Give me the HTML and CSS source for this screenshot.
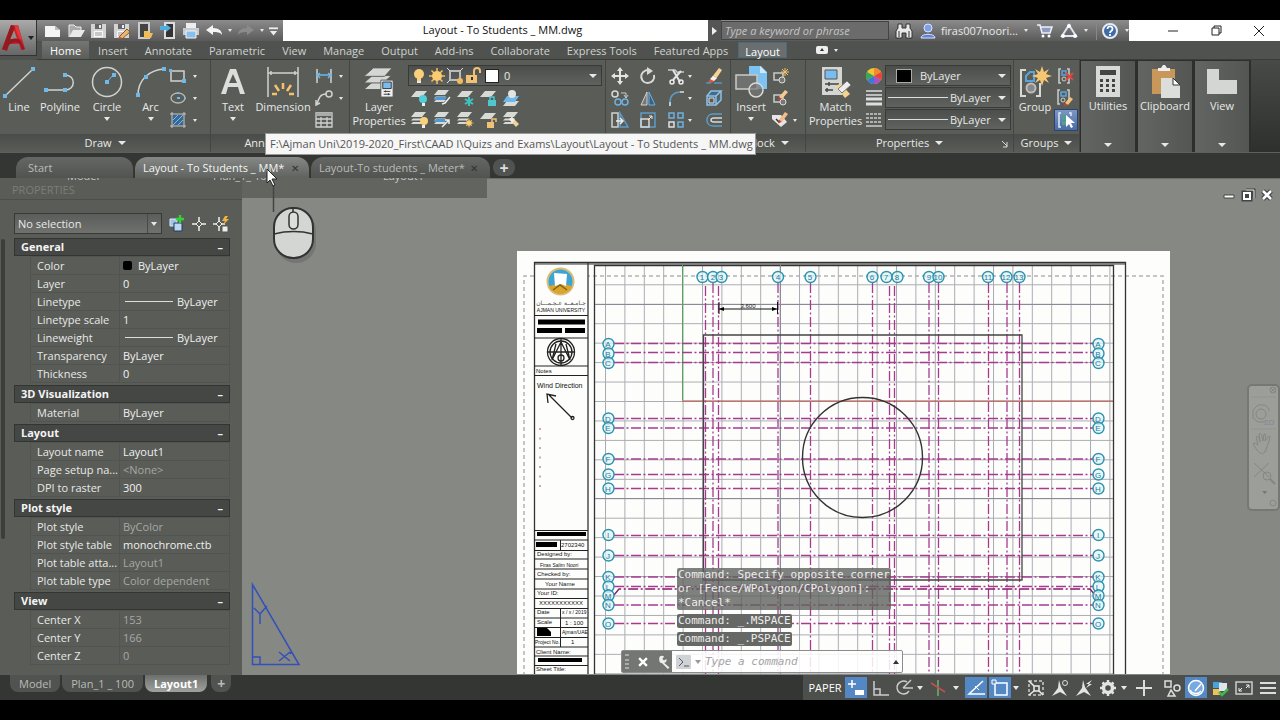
FILE: index.html
```html
<!DOCTYPE html>
<html lang="en">
<head>
<meta charset="utf-8">
<title>Layout - To Students _ MM.dwg</title>
<link rel="stylesheet" href="styles.css">
</head>
<body>
<svg class="sprite" aria-hidden="true">
  <symbol id="i-sheets" viewBox="0 0 34 34"><g fill="#d4d6d4" stroke="#5a5c58" stroke-width="1"><path d="M10 17h20l-8 8H1z"/><path d="M10 10h20l-8 8H1z"/><path d="M11 2h20l-8 9H1z"/></g><path d="M19 15h13v18H19z" fill="#f2f2f2" stroke="#555"/><path d="M21 17h9v7h-9z" fill="#79bdf0" stroke="#333"/><path d="M22 27h7M22 30h7M24 26v2M27 29v2" stroke="#333"/></symbol>
  <symbol id="i-lay" viewBox="0 0 18 18"><path d="M6 2h11l-5 6H1z" fill="#d8dad8"/></symbol>
  <symbol id="i-lays" viewBox="0 0 18 18"><path d="M5 1h11l-4 5H1zM3 7.500h10l-2 2H1zM3 11h10l-2 2H1z" fill="#d8dad8"/></symbol>
  <symbol id="i-sun" viewBox="0 0 18 18"><path d="M9 1v16M1 9h16M3.500 3.500l11 11M14.500 3.500l-11 11" stroke="#f2c05c" stroke-width="1.500"/><circle cx="9" cy="9" r="5" fill="#f9cc72"/></symbol>
  <symbol id="i-bulb" viewBox="0 0 18 18"><circle cx="9" cy="7" r="5" fill="#fbd07c"/><path d="M7 11h4v3H7z" fill="#fbd07c"/><path d="M7 14h4v2H7z" fill="#e8e8e8"/></symbol>
  <symbol id="i-new" viewBox="0 0 18 18"><path d="M1 4h10l5 4v7H1z" fill="#f4f4f4"/><path d="M11 4v4h5" fill="#bbb"/></symbol>
  <symbol id="i-save" viewBox="0 0 18 18"><path d="M1 2h15v14H1z" fill="#d4d4d4"/><path d="M5 2h7v5H5z" fill="#666"/><path d="M9 3h2v3H9z" fill="#eee"/><path d="M4 9h9v6H4z" fill="#f8f8f8"/><path d="M5 11h7M5 13h7" stroke="#999"/></symbol>
</svg>

<div class="app">
  <header class="top">
    <button class="logo" aria-label="Application menu">
      <svg width="24" height="28" viewBox="0 0 24 28"><path d="M9 1h7l7 24-4 1-2-6H7l-3 6H0z" fill="#c8242b"/><path d="M12 6l-4 9h7z" fill="#8f8f8f"/><path d="M9 1L0 25l5 2 2-6c3-3 8-4 11-1l2 6 3-1-5-9c-3-2-7-2-10 0l5-13z" fill="#951a20"/><path d="M12 1h4l4 15-3-2z" fill="#e3383c"/></svg>
      <span class="caret dark"></span>
    </button>
    <div class="titlebar">
      <div class="quick">
        <button aria-label="New"><svg><use href="#i-new"/></svg></button>
        <button aria-label="Open"><svg viewBox="0 0 18 18"><path d="M2 15V3h5l2 2h5v3" fill="#aaa" stroke="#eee"/><path d="M2 15l4-7h12l-4 7z" fill="#e8e8e8"/></svg></button>
        <button aria-label="Save"><svg><use href="#i-save"/></svg></button>
        <button aria-label="Save as"><svg viewBox="0 0 18 18"><use href="#i-save"/><path d="M6 15l8-8 3 3-8 7z" fill="#eeb36c" stroke="#7b5a35"/><path d="M5 17l1-3 3 2z" fill="#d2533e"/></svg></button>
        <button aria-label="Open from mobile"><svg viewBox="0 0 18 18"><path d="M3 1h10v15H3z" fill="#444" stroke="#ccc" stroke-width="2"/><path d="M8 9h4l1 2h4l-2 5H8z" fill="#eebd55"/></svg></button>
        <button aria-label="Save to mobile"><svg viewBox="0 0 18 18"><path d="M6 1h9v15H6z" fill="#333" stroke="#ddd" stroke-width="2"/><path d="M1 4h6V2l5 4-5 4V8H1z" fill="#51ade0"/></svg></button>
        <button aria-label="Plot"><svg viewBox="0 0 18 18"><path d="M4 1h10v5H4z" fill="#eee"/><path d="M1 6h16v7H1z" fill="#c9cbcc"/><path d="M4 9h10v7H4z" fill="#89bfec" stroke="#f2f2f2"/></svg></button>
        <button aria-label="Undo"><svg viewBox="0 0 18 18"><path d="M1 8l7-5v3c6 0 9 3 9 7-2-3-5-3-9-3v3z" fill="#f4f4f4"/></svg></button>
        <span class="caret small"></span>
        <button aria-label="Redo"><svg viewBox="0 0 18 18"><path d="M17 8l-7-5v3c-6 0-9 3-9 7 2-3 5-3 9-3v3z" fill="#8b8b8b"/></svg></button>
        <span class="caret small"></span>
        <button aria-label="Customize" class="narrow"><svg viewBox="0 0 10 18"><path d="M0 6h10" stroke="#eee" stroke-width="2"/><path d="M1 9h8l-4 5z" fill="#eee"/></svg></button>
      </div>
      <h1 class="doc-title">Layout - To Students _ MM.dwg</h1>
      <div class="info">
        <button class="search-arrow" aria-label="Show search"><span class="caret right"></span></button>
        <input class="search" type="text" placeholder="Type a keyword or phrase" aria-label="Search help">
        <button aria-label="Search"><svg viewBox="0 0 18 18"><path d="M3 2h4v4h4V2h4v4l2 3v7h-6v-5H7v5H1V9l2-3z" fill="#e9e9e9" stroke="#333"/><path d="M4 9v6M14 9v6" stroke="#333"/></svg></button>
        <button class="user"><svg viewBox="0 0 18 18"><circle cx="9" cy="6" r="4" fill="#7ca0ea" stroke="#dbe5ff"/><path d="M2 16c0-5 14-5 14 0z" fill="#5e82d8" stroke="#dbe5ff"/></svg>firas007noori...</button>
        <span class="caret small"></span>
        <button aria-label="App store" class="cart"><svg viewBox="0 0 18 18"><path d="M1 3h3l2 8h8l2-6H5" fill="#8e9cc0" stroke="#eef" stroke-width="1.500"/><circle cx="7" cy="14" r="1.500" fill="#fff"/><circle cx="13" cy="14" r="1.500" fill="#fff"/></svg></button>
        <button aria-label="Connect"><svg viewBox="0 0 18 18"><path d="M9 3L2 14h14z" fill="none" stroke="#dfe5f4" stroke-width="2"/><circle cx="9" cy="4" r="2" fill="#fff"/><circle cx="3" cy="14" r="2" fill="#fff"/><circle cx="15" cy="14" r="2" fill="#fff"/></svg></button>
        <span class="caret small"></span>
        <button aria-label="Help" class="help"><svg viewBox="0 0 18 18"><circle cx="9" cy="9" r="7" fill="#3f6ba6" stroke="#e5ecf5" stroke-width="2"/><path d="M6.500 7c0-4 5.500-3 5 0 0 2-2.500 2-2.500 4M9 12v2" stroke="#fff" stroke-width="1.800" fill="none"/></svg></button>
        <span class="caret small"></span>
      </div>
      <div class="win">
        <button aria-label="Minimize"><svg viewBox="0 0 18 18"><path d="M4 9h10" stroke="#222"/></svg></button>
        <button aria-label="Restore"><svg viewBox="0 0 18 18"><path d="M5 6h7v7H5zM7 6V4h7v7h-2" fill="none" stroke="#222"/></svg></button>
        <button aria-label="Close"><svg viewBox="0 0 18 18"><path d="M4 4l10 10M14 4L4 14" stroke="#222"/></svg></button>
      </div>
    </div>
    <nav class="tabs">
      <button class="on">Home</button><button>Insert</button><button>Annotate</button><button>Parametric</button><button>View</button><button>Manage</button><button>Output</button><button>Add-ins</button><button>Collaborate</button><button>Express Tools</button><button>Featured Apps</button><button class="context">Layout</button>
      <button class="mini" aria-label="Minimize ribbon"><svg width="12" height="8" viewBox="0 0 12 8"><rect width="12" height="8" rx="2" fill="#eee"/><path d="M4 5l2-3 2 3z" fill="#333"/></svg><span class="caret small"></span></button>
    </nav>
  </header>

  <section class="ribbon">
    <div class="panel p-draw">
      <div class="body">
        <button class="big"><svg viewBox="0 0 34 34"><path d="M3 31L31 4" stroke="#d0d2d0" stroke-width="1.500"/><path d="M1 29h4v4H1zM29 2h4v4h-4z" fill="#6fb8ea"/></svg>Line</button>
        <button class="big"><svg viewBox="0 0 34 34"><path d="M3 25h19c11 0 11-15 0-15" stroke="#d0d2d0" stroke-width="1.500" fill="none"/><path d="M1 23h4v4H1zM20 23h4v4h-4zM20 8h4v4h-4z" fill="#6fb8ea"/></svg>Polyline</button>
        <button class="big"><svg viewBox="0 0 34 34"><circle cx="17" cy="17" r="14.500" stroke="#d0d2d0" stroke-width="1.500" fill="none"/><path d="M17 17l7-8" stroke="#6fb8ea"/><path d="M15 15h4v4h-4zM22 8h4v4h-4z" fill="#6fb8ea"/></svg>Circle<span class="caret"></span></button>
        <button class="big"><svg viewBox="0 0 34 34"><path d="M4 30C4 15 15 5 30 4" stroke="#d0d2d0" stroke-width="1.500" fill="none"/><path d="M2 28h4v4H2zM10 10h4v4h-4zM28 2h4v4h-4z" fill="#6fb8ea"/></svg>Arc<span class="caret"></span></button>
        <div class="stack">
          <button aria-label="Rectangle"><svg viewBox="0 0 18 18"><path d="M2 4h13v10H2z" fill="none" stroke="#d0d2d0" stroke-width="1.500"/><path d="M0 2h3v3H0zM13 12h4v4h-4z" fill="#6fb8ea"/></svg><span class="caret small"></span></button>
          <button aria-label="Ellipse"><svg viewBox="0 0 18 18"><ellipse cx="9" cy="9" rx="7" ry="5" fill="none" stroke="#b8bab8" stroke-width="1.300"/><path d="M8 8h3v2H8zM8 3h2v2H8zM15 8h2v2h-2z" fill="#6fb8ea"/></svg><span class="caret small"></span></button>
          <button aria-label="Hatch"><svg viewBox="0 0 18 18"><path d="M4 4h10v10H4z" fill="#35699a"/><path d="M4 9l5-5M4 14L14 4M9 14l5-5" stroke="#7fb9e4"/><path d="M3 1v16M15 1v16M1 3h16M1 15h16" stroke="#c5c7c5"/></svg><span class="caret small"></span></button>
        </div>
      </div>
      <div class="name">Draw<span class="caret wide"></span></div>
    </div>
    <div class="panel p-anno">
      <div class="body">
        <button class="big"><svg viewBox="0 0 34 34"><path fill-rule="evenodd" d="M14 4h6l9 25h-5l-2-7H12l-2 7H5zM17 9l-4 9h8z" fill="#dcdedc"/></svg>Text<span class="caret"></span></button>
        <button class="big"><svg viewBox="0 0 34 34"><path d="M2 2v30M32 2v30M2 8h30M5 6v4M29 6v4" stroke="#d0d2d0" stroke-width="1.500"/><path d="M17 18v6M9 20l4 6M25 20l-4 6M6 29h5M28 29h-5" stroke="#f4c26a" stroke-width="2.500"/></svg>Dimension</button>
        <div class="stack">
          <button aria-label="Linear"><svg viewBox="0 0 18 18"><path d="M2 2v14M16 2v14" stroke="#d0d2d0" stroke-width="1.500"/><path d="M2 8h14M5 6L2 8l3 3M13 6l3 2-3 3" stroke="#6fb8ea" fill="none" stroke-width="1.500"/></svg><span class="caret small"></span></button>
          <button aria-label="Leader"><svg viewBox="0 0 18 18"><circle cx="14" cy="5" r="3" fill="none" stroke="#d0d2d0" stroke-width="1.500"/><path d="M11 5C5 5 4 9 2 15M1 11v5l4-2" stroke="#d0d2d0" fill="none" stroke-width="1.500"/></svg><span class="caret small"></span></button>
          <button aria-label="Table"><svg viewBox="0 0 18 18"><path d="M1 2h16v14H1zM1 8h16M1 12h16M6 6v10M12 6v10" fill="none" stroke="#d0d2d0" stroke-width="1.300"/><path d="M1 2h16v3H1z" fill="#aaa"/></svg></button>
        </div>
      </div>
      <div class="name">Annotation<span class="caret wide"></span></div>
    </div>
    <div class="panel p-layer">
      <div class="body">
        <button class="big"><svg><use href="#i-sheets"/></svg>Layer<br>Properties</button>
        <div class="layer-side">
          <div class="combo layer-combo">
            <svg><use href="#i-bulb"/></svg><svg><use href="#i-sun"/></svg>
            <svg viewBox="0 0 18 18"><path d="M4 4h10v9H4z" fill="none" stroke="#bbb" stroke-width="2"/><path d="M1 1l3 3M17 1l-3 3M1 16l3-3" stroke="#ddd"/><circle cx="14" cy="14" r="3" fill="#f3b95a"/></svg>
            <svg viewBox="0 0 18 18"><path d="M10 8V4c0-4 6-4 6 0v2" stroke="#f1c275" stroke-width="2" fill="none"/><path d="M2 8h11v8H2z" fill="#f1c275"/><path d="M7 10h2v3H7z" fill="#333"/></svg>
            <i class="chip white"></i>
            <select aria-label="Layer"><option>0</option></select><span class="caret wide"></span>
          </div>
          <div class="tools five">
            <button aria-label="Layer off"><svg viewBox="0 0 18 18"><use href="#i-lay"/><circle cx="13" cy="10" r="4" fill="#4fd0d6"/><path d="M12 14h3v3h-3z" fill="#eee"/></svg></button>
            <button aria-label="Isolate"><svg viewBox="0 0 18 18"><use href="#i-lays"/><path d="M3 8h11l-2 3H1z" fill="#4e9ad6"/><path d="M17 8l-5 6-3 1" stroke="#eee" stroke-width="1.500" fill="none"/></svg></button>
            <button aria-label="Freeze"><svg viewBox="0 0 18 18"><use href="#i-lay"/><path d="M13 8v9M9 10l8 5M17 10l-8 5" stroke="#3fc2c0" stroke-width="2"/></svg></button>
            <button aria-label="Lock"><svg viewBox="0 0 18 18"><use href="#i-lay"/><path d="M9 11h8v6H9z" fill="#4fc7cf"/><path d="M11 11V8h4v3" stroke="#4fc7cf" fill="none" stroke-width="1.500"/></svg></button>
            <button aria-label="Make current"><svg viewBox="0 0 18 18"><path d="M5 12h12l-4 5H1z" fill="#d8dad8"/><path d="M5 7h12l-4 6H1z" fill="#6fb8ea"/><circle cx="10" cy="5" r="4" fill="#e4e4e4"/></svg></button>
            <button aria-label="Layers on"><svg viewBox="0 0 18 18"><use href="#i-lays"/><circle cx="14" cy="10" r="4" fill="#fbd07c"/><path d="M12 14h3v3h-3z" fill="#eee"/></svg></button>
            <button aria-label="Unisolate"><svg viewBox="0 0 18 18"><use href="#i-lays"/><path d="M3 8h11l-2 3H1z" fill="#4e9ad6"/><path d="M9 16l7-7M12 9h4v4" stroke="#eee" stroke-width="1.500" fill="none"/></svg></button>
            <button aria-label="Thaw"><svg viewBox="0 0 18 18"><use href="#i-lays"/><use href="#i-sun" x="8" y="7" width="10" height="10"/></svg></button>
            <button aria-label="Unlock"><svg viewBox="0 0 18 18"><use href="#i-lay"/><path d="M8 11h7v6H8z" fill="#f1c275"/><path d="M13 11V8h4v3" stroke="#f1c275" fill="none" stroke-width="1.500"/></svg></button>
            <button aria-label="Match layer"><svg viewBox="0 0 18 18"><use href="#i-lays"/><path d="M7 8l3-2 7 7-3 3z" fill="#f0d59a"/><path d="M7 8l3-2 3 3-3 3z" fill="#eee"/></svg></button>
          </div>
        </div>
      </div>
      <div class="name"></div>
    </div>
    <div class="panel p-modify">
      <div class="body">
        <div class="tools four">
          <button aria-label="Move"><svg viewBox="0 0 18 18"><path d="M9 3v12M3 9h12" stroke="#e4e4e4" stroke-width="2"/><path d="M9 0l3 4H6zM9 18l3-4H6zM0 9l4-3v6zM18 9l-4-3v6z" fill="#e4e4e4"/></svg></button>
          <button aria-label="Rotate"><svg viewBox="0 0 18 18"><path d="M12 4a6.500 6.500 0 1 0 3 4" stroke="#d8dad8" stroke-width="2" fill="none"/><path d="M8 0l6 4-6 4z" fill="#d8dad8"/></svg></button>
          <button aria-label="Trim"><svg viewBox="0 0 18 18"><path d="M1 3h7l3 3M11 5h6" stroke="#c8cac8" stroke-width="1.500" fill="none"/><path d="M6 3l7 12M14 4L6 13" stroke="#e4e4e4" stroke-width="2"/><circle cx="5" cy="15" r="2" fill="none" stroke="#eee" stroke-width="1.500"/><circle cx="14" cy="15" r="2" fill="none" stroke="#eee" stroke-width="1.500"/></svg><span class="caret small"></span></button>
          <button aria-label="Erase"><svg viewBox="0 0 18 18"><path d="M7 10l7-9 3 2-6 9z" fill="#f6d396"/><path d="M3 15l5-6 4 2-5 5z" fill="#e4543c"/><path d="M5 12l3-3 4 2-3 3z" fill="#f6f6f6"/><path d="M1 16h5M9 16h8" stroke="#5893bd" stroke-width="1.500"/></svg></button>
          <button aria-label="Copy"><svg viewBox="0 0 18 18"><circle cx="4" cy="5" r="3" fill="none" stroke="#d8dad8" stroke-width="1.500"/><circle cx="7" cy="13" r="3" fill="none" stroke="#6fb0de" stroke-width="1.500"/><circle cx="14" cy="13" r="3" fill="none" stroke="#6fb0de" stroke-width="1.500"/><path d="M10 4h5v4M13 6l2 3 2-3" stroke="#ccc" fill="none"/></svg></button>
          <button aria-label="Mirror"><svg viewBox="0 0 18 18"><path d="M8 3v13H2z" fill="#777" stroke="#d0d2d0"/><path d="M10 3v13h6z" fill="#35618a" stroke="#6fb0de"/></svg></button>
          <button aria-label="Fillet"><svg viewBox="0 0 18 18"><path d="M3 17v-4C3 7 7 3 13 3" stroke="#5c9cc8" stroke-width="1.500" fill="none"/><path d="M13 3h4M3 17v-4" stroke="#ddd" stroke-width="1.500"/></svg><span class="caret small"></span></button>
          <button aria-label="Explode"><svg viewBox="0 0 18 18"><path d="M2 7h9v9H2zM2 7l4-5h10l-5 5M16 2v9l-5 5" fill="#416b8c" stroke="#8fc0e2" stroke-width="1.500"/><path d="M4 9h5v5H4z" fill="#5a5c58" stroke="#ddd"/></svg></button>
          <button aria-label="Stretch"><svg viewBox="0 0 18 18"><path d="M1 2h6v14H1z" fill="none" stroke="#d0d2d0" stroke-width="1.500"/><path d="M9 2l8 14H9z" fill="none" stroke="#5c9cc8" stroke-width="1.500"/><path d="M5 10h6M9 7l3 3-3 3" stroke="#eee" fill="none" stroke-width="1.500"/></svg></button>
          <button aria-label="Scale"><svg viewBox="0 0 18 18"><path d="M2 2h14v14H2z" fill="none" stroke="#5c9cc8" stroke-width="1.500"/><path d="M2 8h8v8H2z" fill="none" stroke="#d8dad8" stroke-width="1.500"/><path d="M9 9l4-4M10 5h3v3" stroke="#eee" fill="none"/></svg></button>
          <button aria-label="Array"><svg viewBox="0 0 18 18"><path d="M2 2h5v5H2zM11 2h5v5h-5zM11 11h5v5h-5z" fill="none" stroke="#6fb0de" stroke-width="1.500"/><path d="M2 11h5v5H2z" fill="none" stroke="#e0e0e0" stroke-width="1.500"/></svg><span class="caret small"></span></button>
          <button aria-label="Offset"><svg viewBox="0 0 18 18"><path d="M17 3H8C0 3 0 15 8 15h9" stroke="#5c9cc8" stroke-width="1.500" fill="none"/><path d="M17 7H9c-4 0-4 4 0 4h8" stroke="#d8dad8" stroke-width="1.500" fill="none"/></svg></button>
        </div>
      </div>
      <div class="name"></div>
    </div>
    <div class="panel p-block">
      <div class="body">
        <button class="big"><svg viewBox="0 0 34 34"><path d="M15 1h12l6 6v17H15z" fill="#7cc2f2"/><path d="M26 1v7h7" fill="#cfe9fb"/><path d="M2 10h21v14H2z" fill="#6f716f" stroke="#c8cac8" stroke-width="1.500"/><circle cx="22" cy="25" r="7" fill="#777" fill-opacity=".7" stroke="#d8dad8" stroke-width="1.500"/></svg>Insert<span class="caret"></span></button>
        <div class="stack">
          <button aria-label="Create block"><svg viewBox="0 0 18 18"><path d="M3 6h9v7H3z" fill="none" stroke="#c8cac8" stroke-width="1.500"/><circle cx="11" cy="13" r="3" fill="#777" stroke="#ddd"/><path d="M14 1v8M10 5h8M11 2l6 6M17 2l-6 6" stroke="#f3c268"/></svg></button>
          <button aria-label="Edit block"><svg viewBox="0 0 18 18"><path d="M3 6h9v7H3z" fill="none" stroke="#c8cac8" stroke-width="1.500"/><circle cx="12" cy="13" r="3" fill="#777" stroke="#ddd"/><path d="M8 8l6-7 3 2-6 7z" fill="#f6c993"/><path d="M7 11l1-3 3 2z" fill="#d8402f"/></svg></button>
          <button aria-label="Edit attributes"><svg viewBox="0 0 18 18"><path d="M1 4h9l6 7-6 5-9-8z" fill="#e6e6e6"/><path d="M5 8l3 3 5-7" stroke="#333" stroke-width="1.500" fill="none"/><path d="M8 9l6-8 3 2-6 8z" fill="#f3bd8a"/><path d="M7 12l1-3 3 2z" fill="#d8402f"/></svg><span class="caret small"></span></button>
        </div>
      </div>
      <div class="name">Block<span class="caret wide"></span></div>
    </div>
    <div class="panel p-props">
      <div class="body">
        <button class="big"><svg viewBox="0 0 34 34"><path d="M3 2h20v28H3z" fill="#d4d6d4"/><path d="M6 5h12v9H6z" fill="#79bdf0" stroke="#555"/><path d="M6 19h14M6 25h8M10 17v4M8 23v4" stroke="#444" stroke-width="1.500"/><path d="M17 22l4-4 10 11-5 4z" fill="#f3d48c"/><path d="M19 24l9-8 4 4-9 8z" fill="#eee" stroke="#777"/></svg>Match<br>Properties</button>
        <div class="prop-rows">
          <svg viewBox="0 0 18 18"><circle cx="9" cy="9" r="8" fill="#f1c535"/><path d="M9 9V1a8 8 0 0 1 7 4z" fill="#f08c2e"/><path d="M9 9l7-4a8 8 0 0 1 0 8z" fill="#e6453c"/><path d="M9 9l7 4a8 8 0 0 1-7 4z" fill="#a552c4"/><path d="M9 9v8a8 8 0 0 1-7-4z" fill="#3a78dc"/><path d="M9 9l-7 4a8 8 0 0 1 0-8z" fill="#35a85a"/></svg>
          <div class="combo"><i class="chip black"></i><select aria-label="Object color"><option>ByLayer</option></select><span class="caret wide"></span></div>
          <svg viewBox="0 0 18 18"><path d="M1 2h16M1 6h16" stroke="#ddd" stroke-width="1.500"/><path d="M1 10h16M1 15h16" stroke="#ddd" stroke-width="3"/></svg>
          <div class="combo"><i class="rule"></i><select aria-label="Lineweight"><option>ByLayer</option></select><span class="caret wide"></span></div>
          <svg viewBox="0 0 18 18"><path d="M1 15h16" stroke="#ccc" stroke-width="1.500"/><path d="M1 3h16M1 7h16M1 11h16" stroke="#ccc" stroke-width="1.500" stroke-dasharray="3 1"/></svg>
          <div class="combo"><i class="rule"></i><select aria-label="Linetype"><option>ByLayer</option></select><span class="caret wide"></span></div>
        </div>
      </div>
      <div class="name">Properties<span class="caret wide"></span><svg class="launch" width="8" height="8" viewBox="0 0 8 8"><path d="M1 1l5 5M6 2v5H2" stroke="#ddd" fill="none"/></svg></div>
    </div>
    <div class="panel p-groups">
      <div class="body">
        <button class="big"><svg viewBox="0 0 34 34"><path d="M8 5H3v26h5M18 31h4V18" stroke="#d8dad8" stroke-width="2" fill="none"/><path d="M8 16v-5l4-4h4v9z" fill="none" stroke="#5aa4dc" stroke-width="2"/><circle cx="13" cy="23" r="4.500" fill="#888" stroke="#bbb" stroke-width="2"/><path d="M24 1l2 6 5-3-3 5 6 2-6 2 3 5-5-3-2 6-2-6-5 3 3-5-6-2 6-2-3-5 5 3z" fill="#f6c772"/></svg>Group</button>
        <div class="stack">
          <button aria-label="Ungroup"><svg viewBox="0 0 18 18"><path d="M5 2H3v14h2M11 2h2v14h-2" stroke="#ccc" fill="none" stroke-width="1.500"/><path d="M6 4h4v4H6z" fill="none" stroke="#5aa4dc" stroke-width="1.500"/><circle cx="8" cy="12" r="2" fill="none" stroke="#ccc"/><path d="M10 6l7 7M17 6l-7 7" stroke="#e0483e" stroke-width="2"/></svg></button>
          <button aria-label="Group edit"><svg viewBox="0 0 18 18"><path d="M4 1H2v14h2M11 1h2v9" stroke="#ccc" fill="none" stroke-width="1.500"/><path d="M5 3h5v4H5z" fill="none" stroke="#5aa4dc" stroke-width="1.500"/><circle cx="7" cy="11" r="2" fill="none" stroke="#ccc"/><path d="M9 14l5-6 3 2-5 6z" fill="#f3c278"/><path d="M8 17l1-3 3 2z" fill="#d8402f"/></svg></button>
          <button aria-label="Group selection" class="pressed"><svg viewBox="0 0 18 18"><path d="M4 2H2v14h2M12 2h2v3" stroke="#dfe9f7" fill="none" stroke-width="1.500"/><path d="M5 4h5v5H5zM5 10h4v4H5z" fill="#4ea28c"/><path d="M9 4v12l3-3 2 4 2-1-2-4h4z" fill="#fff"/></svg></button>
        </div>
      </div>
      <div class="name">Groups<span class="caret wide"></span></div>
    </div>
    <button class="folded"><svg viewBox="0 0 34 34"><path d="M5 1h24v31H5z" fill="#d8dad8"/><path d="M9 5h16v5H9z" fill="#444"/><g fill="#444"><path d="M9 14h3v3H9zM15 14h3v3h-3zM21 14h3v3h-3zM9 19h3v3H9zM15 19h3v3h-3zM21 19h3v3h-3zM9 24h3v3H9zM15 24h3v3h-3zM21 24h3v3h-3z"/></g></svg>Utilities<span class="caret wide"></span></button>
    <button class="folded"><svg viewBox="0 0 34 34"><path d="M4 4h23v25H4z" fill="#c9975a"/><path d="M10 6V3h3l2-3h2l2 3h3v3z" fill="#eee"/><path d="M13 13h12l7 7v13H13z" fill="#dcdedc"/><path d="M25 13v7h7z" fill="#fff" stroke="#333"/></svg>Clipboard<span class="caret wide"></span></button>
    <button class="folded"><svg viewBox="0 0 34 34"><path d="M2 4h12v11h18v14H2z" fill="#d4d6d4"/></svg>View<span class="caret wide"></span></button>
  </section>

  <nav class="doc-tabs">
    <div class="doc-tab start"><button>Start</button></div>
    <div class="doc-tab current"><button>Layout - To Students _ MM*</button><button class="x" aria-label="Close tab">✕</button></div>
    <div class="doc-tab"><button>Layout-To students _ Meter*</button><button class="x" aria-label="Close tab">✕</button></div>
    <button class="add" aria-label="New drawing">+</button>
  </nav>

  <main class="work">
    <aside class="palette">
      <div class="palette-title">PROPERTIES</div>
      <div class="palette-body">
        <div class="pick">
          <div class="combo sel"><select aria-label="Selection"><option>No selection</option></select><span class="caret"></span></div>
          <button aria-label="Toggle pickadd"><svg viewBox="0 0 18 18"><path d="M2 4h7v7H2z" fill="#9fc4e8" stroke="#dcebfa"/><path d="M6 8h8v8H6z" fill="#bcd8f2" stroke="#1c3c5c"/><path d="M12 0v8M8 4h8" stroke="#35d039" stroke-width="2.500"/></svg></button>
          <button aria-label="Select objects"><svg viewBox="0 0 18 18"><path d="M9 2v14M2 9h14" stroke="#eee" stroke-width="1.500"/><path d="M9 6l3 3-3 3-3-3z" fill="#5a5c58" stroke="#eee"/></svg></button>
          <button aria-label="Quick select"><svg viewBox="0 0 18 18"><path d="M7 2v14M1 9h12" stroke="#eee" stroke-width="1.500"/><path d="M7 6l3 3-3 3-3-3z" fill="#5a5c58" stroke="#eee"/><path d="M13 1l-3 5h3l-2 4 6-6h-3l2-3z" fill="#f2b53c"/><path d="M10 11h6v6h-6z" fill="#eee" stroke="#555"/></svg></button>
        </div>
        <section class="group"><h2>General<span>–</span></h2>
          <table>
            <tr><th>Color</th><td><i class="dot"></i>ByLayer</td></tr>
            <tr><th>Layer</th><td>0</td></tr>
            <tr><th>Linetype</th><td><i class="dash"></i>ByLayer</td></tr>
            <tr><th>Linetype scale</th><td>1</td></tr>
            <tr><th>Lineweight</th><td><i class="dash"></i>ByLayer</td></tr>
            <tr><th>Transparency</th><td>ByLayer</td></tr>
            <tr><th>Thickness</th><td>0</td></tr>
          </table></section>
        <section class="group"><h2>3D Visualization<span>–</span></h2>
          <table><tr><th>Material</th><td>ByLayer</td></tr></table></section>
        <section class="group"><h2>Layout<span>–</span></h2>
          <table>
            <tr><th>Layout name</th><td>Layout1</td></tr>
            <tr><th>Page setup na...</th><td class="ro">&lt;None&gt;</td></tr>
            <tr><th>DPI to raster</th><td>300</td></tr>
          </table></section>
        <section class="group"><h2>Plot style<span>–</span></h2>
          <table>
            <tr><th>Plot style</th><td class="ro">ByColor</td></tr>
            <tr><th>Plot style table</th><td>monochrome.ctb</td></tr>
            <tr><th>Plot table atta...</th><td class="ro">Layout1</td></tr>
            <tr><th>Plot table type</th><td class="ro">Color dependent</td></tr>
          </table></section>
        <section class="group"><h2>View<span>–</span></h2>
          <table>
            <tr><th>Center X</th><td class="ro">153</td></tr>
            <tr><th>Center Y</th><td class="ro">166</td></tr>
            <tr><th>Center Z</th><td class="ro">0</td></tr>
          </table></section>
      </div>
      <i class="thumb"></i>
    </aside>

    <div class="canvas">
      <svg class="drawing" aria-label="Layout sheet">
        <defs>
          <pattern id="grid" x="605" y="284.300" width="19.400" height="19.450" patternUnits="userSpaceOnUse"><path d="M0 .5h19.400M.5 0v19.450" stroke="#aaaab2" stroke-width="1"/></pattern>
        </defs>
        <g transform="translate(-242 -178)">
          <rect x="517" y="251" width="653" height="440" fill="#fdfefc"/>
          <path d="M524 690V276H1163V690" fill="none" stroke="#b2b2b2" stroke-width="1.500" stroke-dasharray="4 3"/>
          <rect x="534" y="262" width="54" height="430" fill="#fdfefc"/>
          <rect x="595" y="264" width="518" height="430" fill="url(#grid)"/>
          <path d="M534 263.500H1125" stroke="#999" stroke-width="3"/>
          <path d="M534.500 690V262.500H1125.500V690M588 262V690M594.500 690V265.500H1113.500V690" fill="none" stroke="#333" stroke-width="1.300"/>
          <path d="M780.500 265V675M595 304.500H1113M595 498.500H1113" stroke="#8b8b96"/>
          <path d="M682.500 265V400" stroke="#4fa84f"/><path d="M682 401H1113" stroke="#b8463e"/>
          <g fill="none" stroke="#a83a8e" stroke-width="1.300" stroke-dasharray="10 2.500 2 2.500">
            <path d="M705.500 286V675M713 283V675M718.500 286V675M778 283V675M810.500 283V675M872.500 283V675M889.500 286V675M894.500 286V675M929 283V675M938.500 283V675M988.500 283V675M1007 283V675M1019.500 283V675"/>
            <path d="M614 343.500H1094M614 352.500H1094M614 362.500H1094M614 418.500H1094M614 428H1094M614 459H1094M614 474.500H1094M614 488.500H1094M614 535.500H1094M614 555.500H1094M614 577H1094M614 586.500H1094M614 605H1094M614 623.500H1094"/>
            <path d="M614 595l5-6H1090l5 6" stroke="#87186a"/>
          </g>
          <path d="M703.500 335H1022V580H703.500z" fill="none" stroke="#444" stroke-width="1.300"/>
          <circle cx="862.500" cy="457.500" r="60" fill="none" stroke="#333" stroke-width="1.400"/>
          <path d="M719 302v12M777.500 302v12M719 309h58" stroke="#111"/><path d="M719 309l5-2v4zM777 309l-5-2v4z"/>
          <text class="dim" x="748" y="308">3.600</text>
          <g class="bubbles">
            <g fill="#dff3f8" fill-opacity=".7" stroke="#2e93ae" stroke-width="1.400">
              <circle cx="702.500" cy="277" r="5.500"/><circle cx="713" cy="277" r="5.500"/><circle cx="721.500" cy="277" r="5.500"/><circle cx="778" cy="277" r="5.500"/><circle cx="810.500" cy="277" r="5.500"/><circle cx="872.500" cy="277" r="5.500"/><circle cx="886.500" cy="277" r="5.500"/><circle cx="897.500" cy="277" r="5.500"/><circle cx="929" cy="277" r="5.500"/><circle cx="938.500" cy="277" r="5.500"/><circle cx="988" cy="277" r="5.500"/><circle cx="1006.500" cy="277" r="5.500"/><circle cx="1019.500" cy="277" r="5.500"/>
              <g id="rowmarks"><circle cx="608.500" cy="344" r="5.500"/><circle cx="608.500" cy="353.500" r="5.500"/><circle cx="608.500" cy="363" r="5.500"/><circle cx="608.500" cy="418.500" r="5.500"/><circle cx="608.500" cy="428" r="5.500"/><circle cx="608.500" cy="459" r="5.500"/><circle cx="608.500" cy="474.500" r="5.500"/><circle cx="608.500" cy="488.500" r="5.500"/><circle cx="608.500" cy="535" r="5.500"/><circle cx="608.500" cy="555.500" r="5.500"/><circle cx="608.500" cy="577" r="5.500"/><circle cx="608.500" cy="586.500" r="5.500"/><circle cx="608.500" cy="595.500" r="5.500"/><circle cx="608.500" cy="605" r="5.500"/><circle cx="608.500" cy="623.500" r="5.500"/></g>
              <use href="#rowmarks" x="490"/>
            </g>
            <text x="702" y="280">1</text><text x="713" y="280">2</text><text x="721" y="280">3</text><text x="778" y="280">4</text><text x="810" y="280">5</text><text x="872" y="280">6</text><text x="886" y="280">7</text><text x="897" y="280">8</text><text x="929" y="280">9</text><text x="938" y="280">10</text><text x="988" y="280">11</text><text x="1006" y="280">12</text><text x="1019" y="280">13</text>
            <g id="rownames"><text x="608" y="347">A</text><text x="608" y="357">B</text><text x="608" y="366">C</text><text x="608" y="422">D</text><text x="608" y="431">E</text><text x="608" y="462">F</text><text x="608" y="478">G</text><text x="608" y="492">H</text><text x="608" y="538">I</text><text x="608" y="559">J</text><text x="608" y="580">K</text><text x="608" y="590">L</text><text x="608" y="599">M</text><text x="608" y="608">N</text><text x="608" y="627">O</text></g>
            <use href="#rownames" x="490"/>
          </g>
          <circle cx="560.500" cy="281.500" r="13" fill="#3da4d6" stroke="#d9bd78" stroke-width="2"/><path d="M549 287c4-4 19-4 23 0-4 9-19 9-23 0z" fill="#dba52c"/><path d="M554 273l13 1-1 12-5-2-6 2z" fill="#fff"/><path d="M553 290l7-5 7 5" fill="none" stroke="#7d6422" stroke-width="1.500"/>
          <text class="arabic" x="561" y="305">جـامـعــة عـجـمـــان</text>
          <g class="block">
            <text class="tiny" x="561" y="312" text-anchor="middle">AJMAN UNIVERSITY</text>
            <text x="536" y="373">Notes</text><text class="note" x="537" y="388">Wind Direction</text>
            <text x="561" y="547">2702340</text><text x="537" y="556">Designed by:</text><text class="tiny" x="540" y="567">Firas Salim Noori</text><text x="537" y="576">Checked by:</text><text x="545" y="586">Your Name</text><text x="537" y="595">Your ID:</text><text x="539" y="605">XXXXXXXXXXX</text><text x="537" y="614">Date</text><text class="tiny" x="562" y="614">x / x / 2019</text><text x="537" y="624">Scale</text><text x="565" y="625">1 :  100</text><text class="tiny" x="562" y="634">Ajman/UAE</text><text class="tiny" x="535" y="644">Project No.</text><text x="571" y="644">1</text><text x="536" y="654">Client Name:</text><text x="536" y="671">Sheet Title:</text>
          </g>
          <path d="M534 315.500h54M534 338h54M534 366h54M534 375.500h54M534 530.500h54M534 540h54M534 550.500h54M534 559h54M534 569h54M534 579h54M534 589h54M534 598.500h54M534 608.500h54M534 618h54M534 627.500h54M534 637.500h54M534 647h54M534 656h54M534 665.500h54M560.500 540v10M560.500 608v39" stroke="#222"/>
          <path d="M538 319.500h47v5h-47zM537 328h25v5h-25zM565 328h20v5h-20zM537 532h49v4h-49zM536 542h21v5h-21zM537 628h10l4 4v4h-14zM538 658h44v4h-44z"/>
          <g fill="none" stroke="#222" stroke-width="1.300"><circle cx="561" cy="352" r="13.500"/><circle cx="561" cy="352" r="11"/><path d="M561 338v28M548 352h26M552 360l9-18 9 18M556 344l-4 16M566 344l4 16"/><circle cx="561" cy="358" r="3"/><path d="M572 418L549 395M548 403l-1-9 9 2"/><circle cx="572.500" cy="418" r="1.500"/></g>
          <path d="M540 428v64" stroke="#b05050" stroke-dasharray="2 7.500"/>
          <path d="M252.500 584.500V664.500H299z M252 657h8v8M254 608l6 6 7-8M260 614v10M279 652l11 9M279 661l11-9M290 654l2-3" fill="none" stroke="#3350b8" stroke-width="1.500"/>
        </g>
      </svg>

      <div class="doc-win">
        <button aria-label="Minimize drawing"><svg viewBox="0 0 18 18"><path d="M4 9h10v3H4z" fill="#fff" stroke="#444"/></svg></button>
        <button aria-label="Restore drawing"><svg viewBox="0 0 18 18"><path d="M4 6h8v8H4zM7 4h8v8" stroke="#444" stroke-width="3" fill="none"/><path d="M7 4h8v8" stroke="#eee" fill="none"/><path d="M5 7h6v6H5z" stroke="#fff" stroke-width="2" fill="#444"/></svg></button>
        <button aria-label="Close drawing"><svg viewBox="0 0 18 18"><path d="M5 5l8 8M13 5l-8 8" stroke="#444" stroke-width="5"/><path d="M5 5l8 8M13 5l-8 8" stroke="#fff" stroke-width="2.500"/></svg></button>
      </div>

      <svg class="navbar" width="33" height="127" viewBox="0 0 33 127"><rect x="1" y="1" width="31" height="125" rx="4" fill="#9c9e9a" stroke="#767874" stroke-width="2"/><g fill="none" stroke="#858784"><path d="M4 13h25M4 45h25" stroke="#929490"/><circle cx="26" cy="6" r="3"/><path d="M24 4l4 4M28 4l-4 4"/><path d="M22 27v-2l-4-4h-7l-5 5v8l5 4h8"/><circle cx="14" cy="30" r="5"/><path d="M10 66l-4-6c1-2 3 0 5 1l-2-8c2-2 3 1 4 5l-1-8c2-2 3 2 4 7l1-7c2-1 2 3 1 7l4-5c2 0 0 4-1 8l-3 8c-3 3-6 1-8-2z"/><path d="M7 79l15 14M22 79L7 93"/><circle cx="20" cy="92" r="4"/><path d="M23 95l5 5" stroke-width="2"/><circle cx="26" cy="119" r="3"/></g><path d="M15 107h5l-2 3z" fill="#777"/><text x="17" y="41">2D</text></svg>

      <div class="console">
        <p class="faded">Command: Specify opposite corner or [Fence/WPolygon/CPolygon]: *Cancel*</p>
        <p>Command: _.MSPACE</p>
        <p>Command: _.PSPACE</p>
        <div class="prompt">
          <div class="grip"><i></i><button aria-label="Close command line"><svg viewBox="0 0 18 18"><path d="M4 4l10 10M14 4L4 14" stroke="#fff" stroke-width="3"/></svg></button><button aria-label="Customize"><svg viewBox="0 0 18 18"><path d="M3 4c0-3 4-4 6-2L7 5l2 2 3-2c1 3-1 5-3 5l7 6-2 2-7-7C5 11 2 9 3 4z" fill="#eee"/></svg></button></div>
          <svg class="cli" viewBox="0 0 15 14"><rect x="0" y="0" width="15" height="14" rx="1" fill="#cfd3d6"/><path d="M3 3l4 4-4 4M8 11h5" fill="none" stroke="#556"/></svg><span class="caret grey"></span>
          <input type="text" placeholder="Type a command" aria-label="Command"><span class="caret up"></span>
        </div>
      </div>
    </div>

    <div class="peek"><span>Model</span><span>Plan_1_ 100</span><span>Layout1</span></div>
    <svg class="mouse" width="52" height="80" viewBox="0 0 52 80"><path d="M6.500 0v26" stroke="#444" stroke-width="1.500"/><rect x="9" y="25" width="40" height="52" rx="20" fill="#555" opacity=".35"/><rect x="7" y="22" width="39" height="50" rx="19" fill="#d4d6d4" stroke="#333" stroke-width="2"/><path d="M7 48c12-3 27-3 39 0M26 22v4" stroke="#333" stroke-width="1.500" fill="none"/><rect x="22" y="26" width="9" height="17" rx="4.500" fill="#ddd" stroke="#333" stroke-width="1.500"/></svg>
  </main>

  <footer class="status">
    <nav class="layouts"><button>Model</button><button>Plan_1 _ 100</button><button class="on">Layout1</button><button class="plus" aria-label="New layout">+</button></nav>
    <div class="toggles">
      <button class="paper">PAPER</button>
      <button class="lit" aria-label="Dynamic input"><svg viewBox="0 0 18 18"><path d="M1 5h8M5 1v8" stroke="#fff" stroke-width="1.500"/><path d="M8 11h9v5H8z" fill="#fff"/></svg></button>
      <button aria-label="Ortho"><svg viewBox="0 0 18 18"><path d="M3 2v14h15M3 10h6v6" stroke="#ccc" fill="none" stroke-width="1.500"/></svg></button>
      <button aria-label="Polar"><svg viewBox="0 0 18 18"><path d="M14 12a6.500 6.500 0 1 1-2-9M8 9h10M8 9l8-8" stroke="#ccc" fill="none" stroke-width="1.500"/></svg></button>
      <span class="caret"></span>
      <button class="iso" aria-label="Isodraft"><svg viewBox="0 0 18 18"><path d="M9 1v16" stroke="#6fb36b" stroke-width="1.500"/><path d="M2 4l14 9" stroke="#c05050" stroke-width="1.500"/></svg></button>
      <span class="caret"></span>
      <button class="lit sep" aria-label="Object snap tracking"><svg viewBox="0 0 18 18"><path d="M16 2L2 15h16" stroke="#fff" fill="none" stroke-width="1.500"/><path d="M8 7l4 4" stroke="#fff"/></svg></button>
      <button class="lit" aria-label="Object snap"><svg viewBox="0 0 18 18"><path d="M4 4h12v12H4z" stroke="#fff" fill="none" stroke-width="1.500"/><path d="M1 1h4v4H1z" fill="#5a92cf" stroke="#fff"/></svg></button>
      <span class="caret"></span>
      <button class="sep" aria-label="Selection cycling"><svg viewBox="0 0 18 18"><path d="M2 2h14v14H2z" stroke="#ccc" fill="none" stroke-width="1.500" stroke-dasharray="3 2"/><path d="M7 7h5v5H7zM2 2l5 5M12 12l4 4M2 16l5-4" stroke="#eee" fill="none" stroke-width="1.500"/></svg></button>
      <button aria-label="Annotation visibility"><svg viewBox="0 0 18 18"><path d="M8 1l2 7 6 9-7-4-8 4 6-8z" fill="#e4e4e4"/><circle cx="14" cy="4" r="2.500" fill="none" stroke="#ddd"/></svg></button>
      <button aria-label="Auto scale"><svg viewBox="0 0 18 18"><path d="M8 1l2 7 6 9-7-4-8 4 6-8z" fill="#e4e4e4"/><path d="M17 1l-6 4h3l-3 4 6-4h-3z" fill="#eee"/></svg></button>
      <button aria-label="Workspace"><svg viewBox="0 0 18 18"><circle cx="9" cy="9" r="4.500" fill="none" stroke="#e4e4e4" stroke-width="3.500"/><path d="M9 1v3M9 14v3M1 9h3M14 9h3M3.500 3.500l2 2M12.500 12.500l2 2M14.500 3.500l-2 2M5.500 12.500l-2 2" stroke="#e4e4e4" stroke-width="2.500"/></svg></button>
      <span class="caret"></span>
      <button class="sep" aria-label="Annotation monitor"><svg viewBox="0 0 18 18"><path d="M9 1v16M1 9h16" stroke="#ddd" stroke-width="2"/></svg></button>
      <button class="sep" aria-label="Isolate objects"><svg viewBox="0 0 18 18"><path d="M2 2h6v6H2zM8 11l4 6H5z" fill="none" stroke="#ddd" stroke-width="1.500"/><circle cx="14" cy="9" r="3" fill="none" stroke="#ddd" stroke-width="1.500"/></svg></button>
      <button class="lit" aria-label="Hardware acceleration"><svg viewBox="0 0 18 18"><circle cx="9" cy="9" r="7.500" fill="#77aade" stroke="#fff" stroke-width="1.500"/><path d="M8 12l6-7M3 11c2 4 8 5 11 1" stroke="#fff" stroke-width="1.500" fill="none"/></svg></button>
      <button aria-label="Trusted files"><svg viewBox="0 0 18 18"><path d="M2 3h9v6H2z" fill="#4aa3d8"/><path d="M2 10h7v6H2z" fill="#eac35a"/><path d="M8 4h8v8H8z" fill="#dfe6ea"/><path d="M8 13l3 3 6-6" stroke="#46b350" stroke-width="2.500" fill="none"/></svg></button>
      <button aria-label="Clean screen"><svg viewBox="0 0 18 18"><path d="M1 3h16v12H1z" stroke="#ccc" fill="none" stroke-width="1.500"/><path d="M4 12l3-3M4 9v3h3M14 6l-3 3M11 6h3v3" stroke="#eee" fill="none"/></svg></button>
      <button aria-label="Customization"><svg viewBox="0 0 18 18"><path d="M1 4h16M1 9h16M1 14h16" stroke="#ddd" stroke-width="2"/></svg></button>
    </div>
  </footer>

  <div class="tooltip" role="tooltip">F:\Ajman Uni\2019-2020_First\CAAD I\Quizs and Exams\Layout\Layout - To Students _ MM.dwg</div>
  <svg class="cursor" width="12" height="19" viewBox="0 0 12 19"><path d="M1 1v14l3-3 3 6 2-1-3-6h5z" fill="#fff" stroke="#222"/></svg>
</div>
</body>
</html>
```
FILE: styles.css
```css
* { box-sizing: border-box; }
body { margin: 0; background: #000; color: #e8e9e7; font: 11px/16px "Open Sans", "Noto Sans", sans-serif; }
button { margin: 0; padding: 0; border: 0; background: none; color: inherit; font: inherit; white-space: nowrap; }
select, input { border: 0; background: none; color: inherit; font: inherit; padding: 0; margin: 0; min-width: 0; appearance: none; outline: 0; }
svg { flex: none; }
.sprite { position: absolute; width: 0; height: 0; }
.app { position: relative; display: flex; flex-direction: column; height: 100vh; padding: 20px 0; overflow: hidden; }

.caret { flex: none; width: 0; height: 0; border: 3px solid transparent; border-top: 4px solid #e8e8e8; border-bottom: 0; }
.caret.wide { border-width: 4px 4px 0; }
.caret.small { border-width: 3px 2px 0; }
.caret.dark { border-top-color: #222; }
.caret.grey { border-top-color: #999; }
.caret.right { border: 4px solid transparent; border-left: 5px solid #eee; border-right: 0; }
.caret.up { border: 3px solid transparent; border-bottom: 4px solid #333; border-top: 0; }

/* title bar and ribbon tabs */
.top { flex: none; display: grid; grid-template-columns: 37px minmax(0, 1fr); grid-template-rows: 21px 19px; background: #4f524e; }
.logo { grid-row: 1 / 3; display: flex; align-items: center; gap: 2px; height: 36px; padding-left: 2px; background: linear-gradient(#aaa, #666); border: 1px solid #333; border-width: 0 1px 1px 0; }
.titlebar { display: flex; }
.quick { display: flex; align-items: center; gap: 5px; width: 246px; padding: 0 7px; background: linear-gradient(#8b8b8b, #5a5a5a); }
.quick button, .info button { display: flex; align-items: center; }
.quick svg, .info svg { width: 18px; height: 18px; }
.quick .narrow svg { width: 9px; }
.doc-title { flex: 1; margin: 0; padding-left: 14px; background: #fff; color: #111; font-size: 11px; font-weight: 400; line-height: 20px; text-align: center; }
.info { display: flex; align-items: center; gap: 6px; width: 421px; background: linear-gradient(#8b8b8b, #5a5a5a); }
.search-arrow { width: 13px; height: 100%; justify-content: center; background: #555; }
.search { width: 169px; height: 19px; margin-left: -6px; padding: 0 3px; background: #6b6b6b; border: 1px solid #444; }
.search::placeholder { color: #c4c4c4; font-style: italic; opacity: 1; }
.user { gap: 4px; }
.cart { margin-left: 2px; }
.help { margin-left: 2px; padding-left: 4px; border-left: 1px solid #888; }
.win { display: flex; width: 151px; padding-left: 22px; background: #fff; }
.win button { width: 43px; display: grid; place-items: center; }
.win svg { width: 18px; height: 18px; }
.tabs { display: flex; gap: 1px; padding-left: 5px; border-bottom: 1px solid #3a3c39; }
.tabs button { padding: 0 8px; line-height: 19px; color: #d0d2cf; }
.tabs .on { background: linear-gradient(#737672, #5a5d59); color: #fff; }
.tabs .context { margin: 1px 0 1px 1px; padding: 0 6px; line-height: 17px; background: #6a6e6e; border: 1px solid #4d6a7b; color: #fff; }
.tabs .mini { display: flex; align-items: center; gap: 6px; margin-left: 20px; }

/* ribbon */
.ribbon { flex: none; display: flex; height: 93px; background: linear-gradient(#474a46, #2e302d); border-bottom: 1px solid #5d605c; }
.panel { display: flex; flex-direction: column; background: #5a5c58; border-right: 1px solid #444643; }
.body { flex: 1; display: flex; padding-top: 5px; }
.name { position: relative; display: flex; align-items: center; justify-content: center; gap: 6px; height: 18px; background: linear-gradient(#4a4c49, #5a5c58); line-height: 16px; }
.launch { position: absolute; right: 4px; bottom: 4px; }
.big { display: flex; flex-direction: column; align-items: center; justify-content: flex-start; line-height: 14px; }
.big svg { width: 34px; height: 34px; margin-bottom: 1px; }
.big .caret { margin-top: 3px; }
.stack { display: grid; grid-template-rows: repeat(3, 22px); }
.stack button { display: flex; align-items: center; gap: 6px; }
.stack svg, .tools svg, .prop-rows > svg, .layer-combo svg { width: 18px; height: 18px; }
.stack .pressed { background: linear-gradient(#7b97c4, #4c6ba3); border: 1px solid #2c4470; padding: 0 2px; margin-left: -2px; }
.p-draw { width: 211px; }
.p-draw .body { display: grid; grid-template-columns: 38px 44px 50px 37px 36px; }
.p-anno { width: 139px; }
.p-anno .body { display: grid; grid-template-columns: 44px 56px 4px 32px; }
.p-anno .stack { grid-column: 4; }
.p-layer { width: 256px; }
.p-layer .big { width: 58px; }
.p-layer .big svg { width: 32px; }
.layer-side { flex: 1; }
.combo { position: relative; display: flex; align-items: center; height: 21px; padding-right: 4px; background: linear-gradient(#4c4e4b, #5f625e); border: 1px solid #383a37; }
.combo select { flex: 1; }
.layer-combo { margin-right: 3px; padding-left: 1px; }
.chip { width: 14px; height: 14px; border: 1px solid #222; }
.chip.white { margin: 0 5px 0 3px; background: #fff; }
.chip.black { margin: 0 8px 0 10px; width: 16px; background: #000; border-color: #aaa; }
.rule { width: 60px; margin: 0 2px; border-top: 1px solid #ddd; }
.tools { display: grid; grid-auto-rows: 22px; align-items: center; justify-content: start; }
.tools button { display: flex; align-items: center; gap: 3px; }
.five { grid-template-columns: repeat(5, 22px); column-gap: 1px; padding: 1px 0 0 2px; }
.p-modify { width: 125px; }
.four { grid-template-columns: 28px 28px 38px 18px; padding-left: 5px; }
.p-block { width: 75px; }
.p-block .big { width: 40px; }
.p-block .stack button { gap: 4px; }
.p-props { width: 208px; }
.p-props .big { width: 59px; }
.prop-rows { flex: 1; display: grid; grid-template-columns: 18px minmax(0, 1fr); grid-auto-rows: 21px; column-gap: 2px; row-gap: 1px; align-items: center; padding-right: 2px; }
.p-groups { width: 66px; }
.p-groups .big { width: 42px; }
.folded { display: flex; flex-direction: column; align-items: center; width: 57px; padding: 4px 0 5px; line-height: 14px; background: linear-gradient(90deg, #626561, #535652); border: 2px solid #2d2f2c; border-width: 1px 2px 0 1px; }
.folded svg { width: 34px; height: 34px; }
.folded .caret { margin-top: auto; }

/* drawing tabs */
.doc-tabs { flex: none; display: flex; align-items: flex-end; gap: 2px; height: 25px; padding-left: 16px; background: #343634; }
.doc-tab { display: flex; justify-content: space-between; align-items: center; width: 179px; height: 21px; padding: 0 12px 0 8px; border-radius: 12px 12px 0 0; background: linear-gradient(#646763, #50534f); color: #b9bbb8; }
.doc-tab.start { width: 117px; padding-left: 12px; }
.doc-tab.current { width: 174px; padding-right: 10px; background: linear-gradient(#858884, #5f625e); color: #f4f4f4; }
.doc-tab .x { color: #333; font-size: 10px; }
.add { width: 22px; height: 17px; margin: 0 0 2px 1px; border-radius: 8px; background: #50534f; color: #ddd; font-size: 16px; font-weight: 700; line-height: 16px; }

/* workspace */
.work { position: relative; flex: 1; min-height: 0; display: flex; }
.palette { position: relative; flex: none; width: 242px; overflow: hidden; background: #5a5c58; }
.palette-title { height: 22px; padding: 4px 12px; border-bottom: 1px solid #4d4f4c; color: #7c7e7b; }
.palette-body { padding: 13px 12px 0 14px; }
.pick { display: flex; align-items: center; gap: 4px; margin-bottom: 4px; }
.pick button { display: flex; }
.pick svg { width: 18px; height: 18px; }
.sel { flex: none; width: 148px; margin-right: 2px; padding-left: 3px; background: linear-gradient(#5a5d59, #6e716d); }
.sel select { height: 19px; border-right: 1px solid #484a47; margin-right: 3px; }
.group { margin-bottom: 2px; }
.group h2 { display: flex; justify-content: space-between; margin: 0; padding: 0 6px; background: #454744; border: 1px solid #333532; font-size: 11px; line-height: 16px; color: #f4f4f4; }
.group table { width: 200px; margin-left: 16px; table-layout: fixed; border-collapse: collapse; }
.group tr { height: 18px; }
.group th, .group td { padding: 0 0 0 3px; border: 1px solid #525451; line-height: 16px; height: 18px; font-weight: 400; text-align: left; white-space: nowrap; }
.group th { width: 89px; padding-left: 6px; }
.group td { color: #f0f0f0; }
.group td.ro { color: #a6a8a5; }
.dot { display: inline-block; width: 9px; height: 9px; margin-right: 6px; border-radius: 2px; background: #000; }
.dash { display: inline-block; width: 48px; margin: 0 4px 4px 2px; border-top: 1px solid #ddd; }
.thumb { position: absolute; left: 1px; top: 61px; width: 4px; height: 300px; border-radius: 2px; background: #3c3e3b; }
.canvas { position: relative; flex: 1; min-width: 0; overflow: hidden; background: #868884; border-top: 1px solid #6c6e6a; }
.drawing { position: absolute; left: 0; top: -1px; width: 100%; height: 100%; }
.drawing text { font-family: "Liberation Sans", sans-serif; font-size: 6px; fill: #111; }
.drawing .dim { text-anchor: middle; }
.drawing .tiny { font-size: 5px; }
.drawing .note { font-size: 7px; }
.drawing .arabic { font-family: "DejaVu Sans", sans-serif; text-anchor: middle; fill: #444; }
.drawing .bubbles text { font-size: 8px; fill: #1d7d9c; text-anchor: middle; }
.doc-win { position: absolute; right: 4px; top: 7px; display: flex; gap: 1px; }
.doc-win svg { display: block; width: 18px; height: 18px; }
.navbar { position: absolute; right: 0; top: 205px; }
.navbar text { font: 8px "Open Sans", sans-serif; fill: #7e8892; }
.console { position: absolute; left: 379px; bottom: 2px; width: 282px; font: 11px/14px "DejaVu Sans Mono", monospace; }
.console p { width: fit-content; margin: 0 0 4px 56px; padding: 0 1px; border-radius: 2px; background: #666865; color: #eee; }
.console p.faded { width: 214px; background: rgba(95, 97, 94, .8); }
.prompt { display: flex; align-items: center; height: 23px; background: rgba(255, 255, 255, .85); border: 1px solid #8b8b8b; border-radius: 2px; padding-right: 3px; }
.prompt input { flex: 1; }
.prompt input::placeholder { color: #a4a4a4; font-style: italic; opacity: 1; }
.grip { display: flex; align-items: center; gap: 7px; width: 50px; height: 100%; padding-left: 3px; background: #747673; color: #fff; }
.grip i { width: 4px; height: 15px; border: 2px dotted #aaa; border-width: 0 2px; }
.grip svg { display: block; width: 14px; height: 14px; }
.cli { width: 15px; height: 14px; margin: 0 4px; }
.prompt .grey { margin-right: 4px; }
.peek { position: absolute; left: 0; top: 0; width: 487px; height: 20px; overflow: hidden; display: flex; padding-left: 67px; background: linear-gradient(90deg, transparent 242px, #62655f 242px); color: #c4c4c4; line-height: 0; }
.peek span { flex: none; width: 146px; margin-top: -2px; }
.peek span + span { width: 170px; }
.mouse { position: absolute; left: 267px; top: 8px; }

/* status bar */
.status { flex: none; display: flex; justify-content: space-between; height: 25px; background: #343634; }
.layouts { display: flex; align-items: flex-start; gap: 2px; padding-left: 10px; }
.layouts button { height: 17px; padding: 0 9px; border-radius: 0 0 8px 8px; background: #50534f; color: #b9bbb8; line-height: 16px; }
.layouts .on { background: linear-gradient(#6c6f6b, #a0a29f); color: #fff; font-weight: 700; }
.layouts .plus { margin-left: 2px; padding: 0 6px; font-size: 14px; font-weight: 700; }
.toggles { display: flex; align-items: center; gap: 2px; padding: 0 1px 0 4px; background: #4d4f4c; }
.toggles button { display: grid; place-items: center; width: 22px; height: 21px; }
.toggles svg { width: 18px; height: 18px; }
.toggles .paper { width: 36px; color: #fff; }
.toggles .iso { width: 26px; }
.toggles .sep { margin-left: 4px; }
.toggles .lit { background: #5488c4; }

.tooltip { position: absolute; left: 265px; top: 133px; height: 22px; padding: 0 2px 0 4px; background: #f6f6f6; border: 1px solid #999; color: #555; line-height: 20px; white-space: nowrap; }
.cursor { position: absolute; left: 266px; top: 168px; }
```
